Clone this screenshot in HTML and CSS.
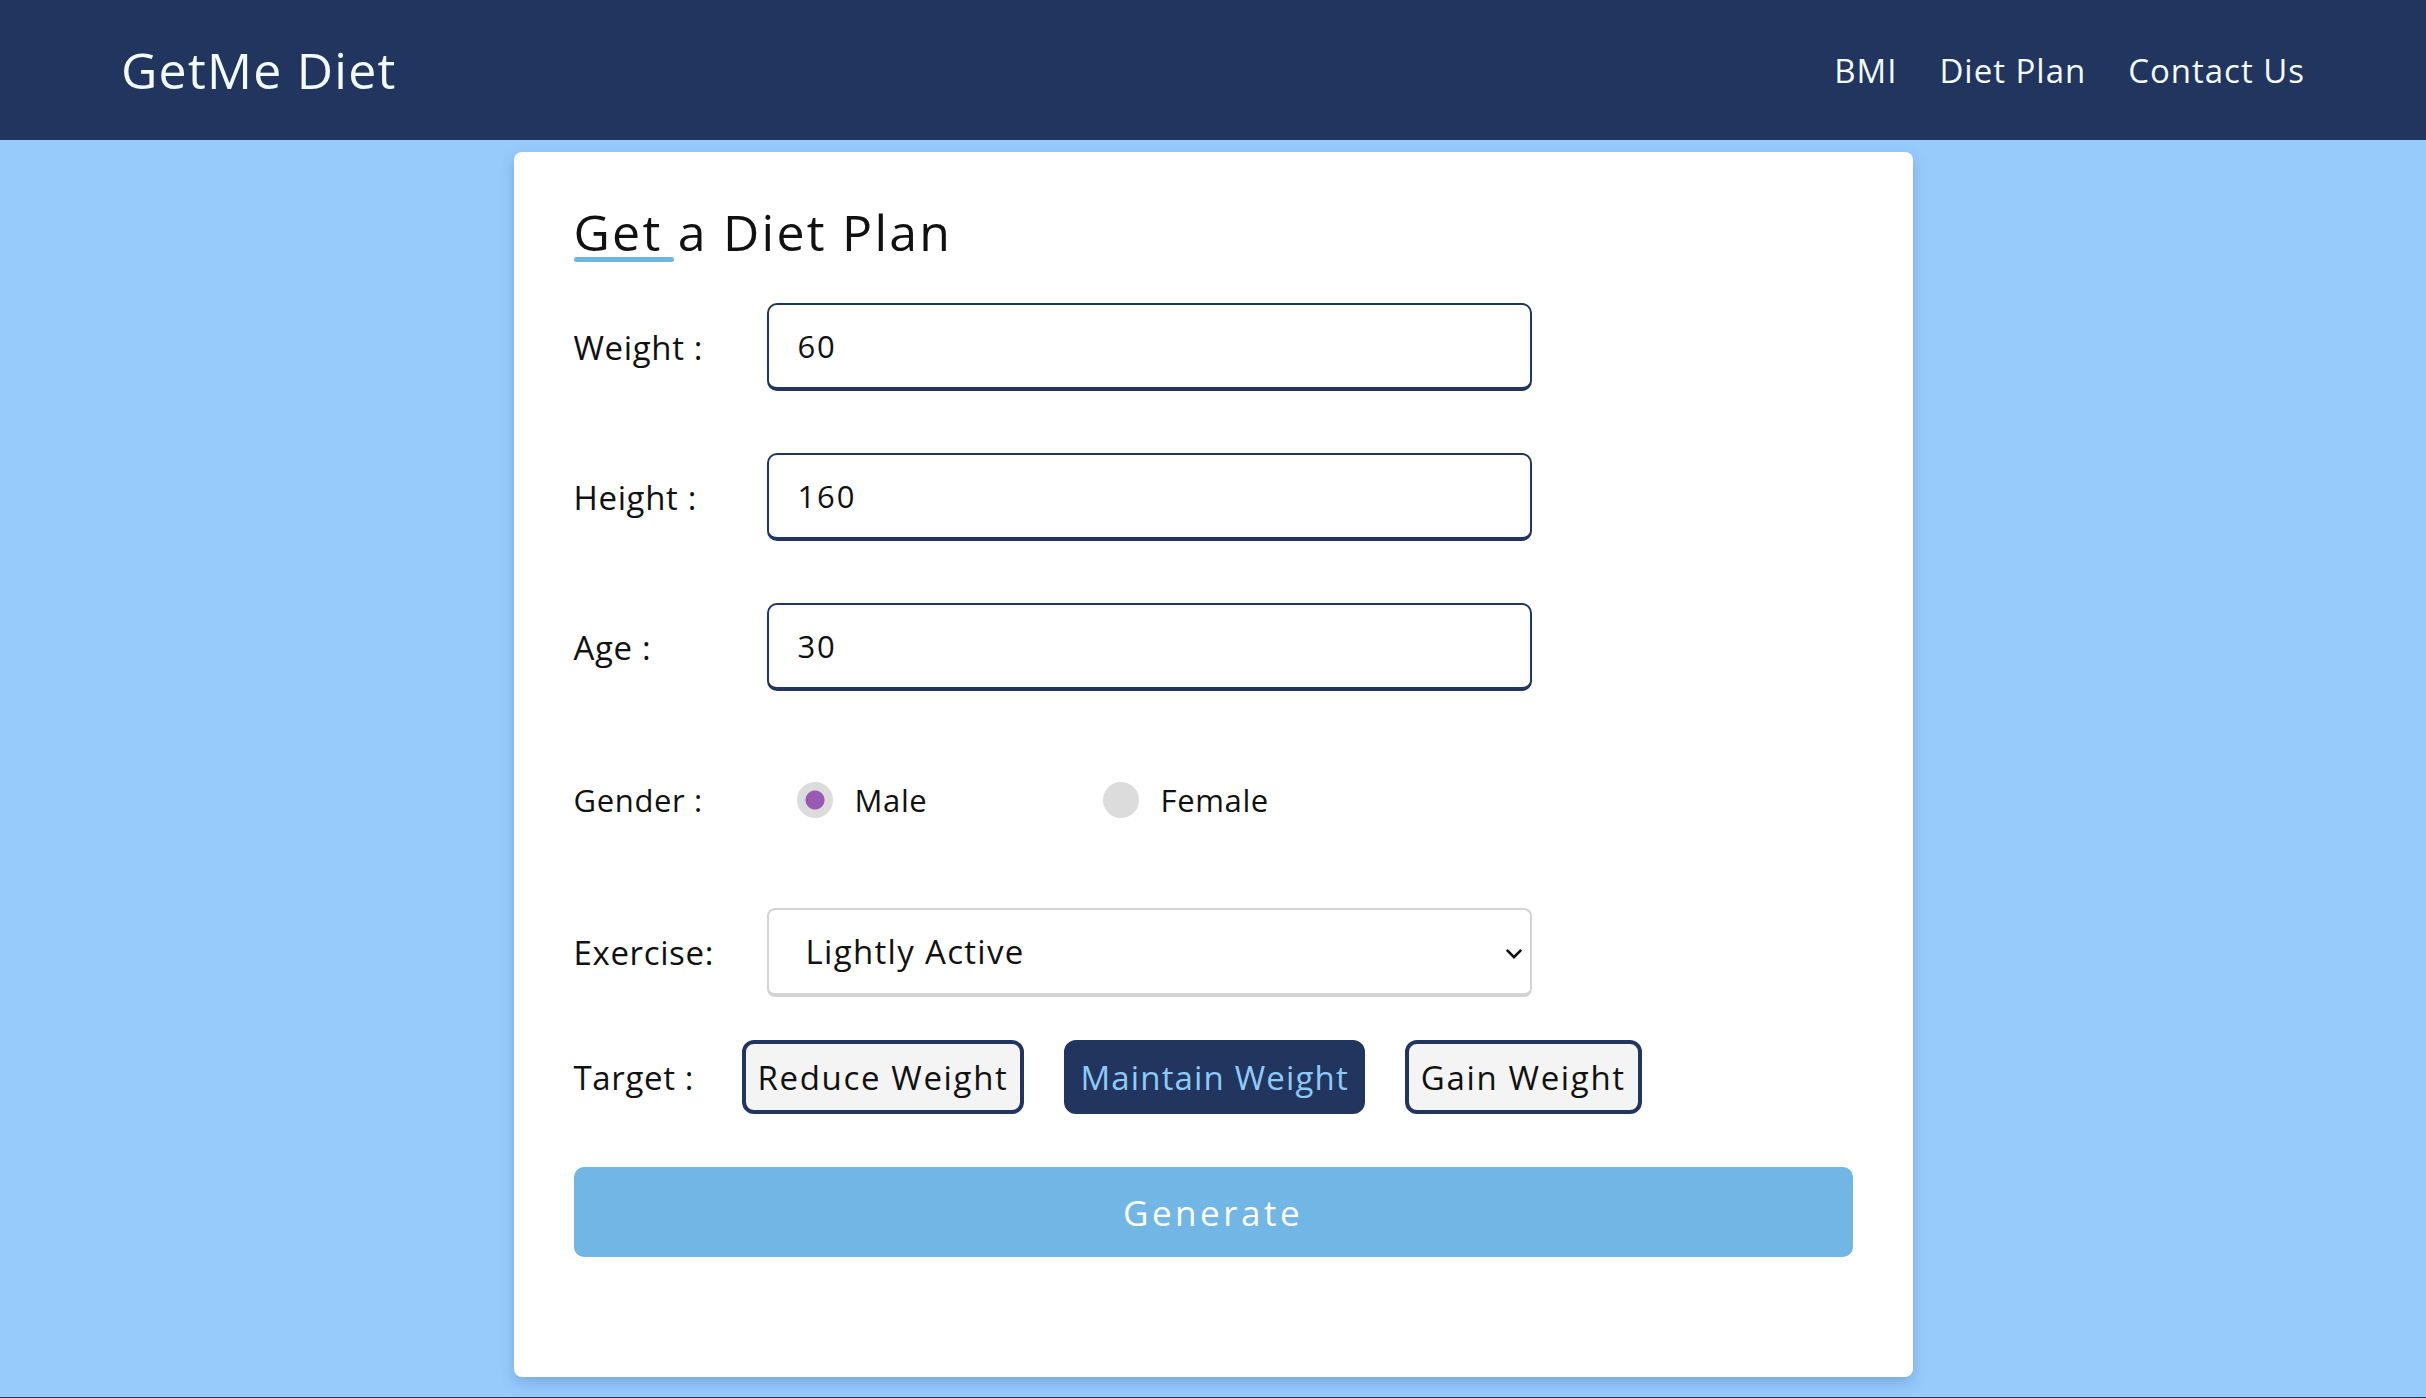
FILE: index.html
```html
<!DOCTYPE html>
<html lang="en">
<head>
<meta charset="utf-8">
<title>GetMe Diet</title>
<link rel="stylesheet" href="styles.css">
</head>
<body>
<header class="topbar">
  <div class="logo">GetMe Diet</div>
  <nav class="nav">
    <a href="#">BMI</a>
    <a href="#">Diet Plan</a>
    <a href="#">Contact Us</a>
  </nav>
</header>
<main class="page">
  <section class="card">
    <h1 class="title">Get a Diet Plan</h1>
    <div class="title-bar"></div>
    <form class="form">
      <div class="row row-input">
        <label class="label">Weight :</label>
        <input class="field" type="text" value="60">
      </div>
      <div class="row row-input">
        <label class="label">Height :</label>
        <input class="field" type="text" value="160">
      </div>
      <div class="row row-input">
        <label class="label">Age :</label>
        <input class="field" type="text" value="30">
      </div>
      <div class="row row-gender">
        <span class="label">Gender :</span>
        <label class="option"><input class="radio" type="radio" name="g" checked><span>Male</span></label>
        <label class="option"><input class="radio" type="radio" name="g"><span>Female</span></label>
      </div>
      <div class="row row-select">
        <label class="label">Exercise:</label>
        <div class="select-wrap">
          <select class="select">
            <option>Lightly Active</option>
          </select>
          <svg class="chev" viewBox="0 0 20 12" width="18" height="11"><path d="M2 2 L10 10 L18 2" fill="none" stroke="#111" stroke-width="3"/></svg>
        </div>
      </div>
      <div class="row row-target">
        <span class="label label-target">Target :</span>
        <button type="button" class="tbtn">Reduce Weight</button>
        <button type="button" class="tbtn active">Maintain Weight</button>
        <button type="button" class="tbtn">Gain Weight</button>
      </div>
      <button type="button" class="generate">Generate</button>
    </form>
  </section>
</main>
<footer class="footer"></footer>
</body>
</html>
```

FILE: styles.css
```css
* { box-sizing: border-box; }
html, body { margin: 0; padding: 0; }
body {
  background: #97cbfc;
  font-family: "Open Sans", "Noto Sans", sans-serif;
  color: #111;
  letter-spacing: 0.04em;
}
.topbar {
  height: 140px;
  background: #22355f;
  display: flex;
  align-items: center;
  justify-content: space-between;
  padding: 0 121px 0 121px;
}
.logo {
  color: #f2fbff;
  font-size: 50px;
  font-weight: 500;
  letter-spacing: 0.025em;
}
.nav { display: flex; gap: 42px; }
.nav a {
  color: #f2fbff;
  text-decoration: none;
  font-size: 33px;
  letter-spacing: 0.03em;
}
.page {
  padding: 12px 0 20px;
  display: flex;
  justify-content: center;
}
.card {
  width: 1399px;
  background: #fff;
  border-radius: 8px;
  padding: 55px 60px 120px;
  box-shadow: 0 6px 14px rgba(30, 80, 140, 0.25);
}
.title {
  margin: 0;
  font-size: 50px;
  line-height: 50px;
  font-weight: 400;
  color: #111;
  letter-spacing: 0.045em;
}
.title-bar {
  width: 100px;
  height: 5px;
  border-radius: 3px;
  background: #6fb5e3;
  margin-top: 0;
}
.form { display: flex; flex-direction: column; margin-top: 41px; }
.row { display: flex; align-items: center; }
.label {
  width: 193px;
  flex: none;
  font-size: 33px;
  color: #111;
}
.row-input { height: 88px; margin-bottom: 62px; }
.row-input + .row-input + .row-input { margin-bottom: 0; }
.field {
  width: 765px;
  height: 88px;
  border: 2px solid #22355f;
  border-bottom-width: 4px;
  border-radius: 10px;
  padding: 0 29px;
  font-family: inherit;
  font-size: 31px;
  letter-spacing: 0.06em;
  color: #111;
  outline: none;
}
.row-gender { height: 36px; margin-top: 91px; }
.option {
  width: 306px;
  display: flex;
  align-items: center;
  gap: 22px;
  font-size: 31px;
}
.option:first-of-type { margin-left: 30px; }
.radio {
  appearance: none;
  -webkit-appearance: none;
  margin: 0;
  width: 36px;
  height: 36px;
  border-radius: 50%;
  background: #dcdcdc;
  flex: none;
}
.radio:checked {
  background: radial-gradient(circle, #9b59b6 0 9px, #dcdcdc 10px);
}
.row-gender .label { font-size: 31px; }
.row-select { height: 89px; margin-top: 90px; }
.select-wrap { position: relative; width: 765px; height: 89px; }
.select {
  appearance: none;
  -webkit-appearance: none;
  width: 100%;
  height: 100%;
  border: 2px solid #d3d3d3;
  border-bottom-width: 4px;
  border-radius: 8px;
  background: #fff;
  padding: 0 37px;
  font-family: inherit;
  font-size: 33px;
  letter-spacing: 0.04em;
  color: #111;
}
.chev { position: absolute; right: 9px; top: 40px; pointer-events: none; }
.row-target { height: 74px; margin-top: 43px; gap: 40px; }
.label-target { width: 128px; }
.tbtn {
  height: 74px;
  border: 4px solid #22355f;
  border-radius: 12px;
  background: #f4f4f4;
  padding: 0 12px;
  font-family: inherit;
  font-size: 33px;
  letter-spacing: 0.05em;
  color: #111;
}
.tbtn.active { background: #22355f; color: #8ecaf8; letter-spacing: 0.035em; }
.generate {
  margin-top: 53px;
  height: 90px;
  width: 100%;
  border: none;
  border-radius: 10px;
  background: #71b6e4;
  color: #fff;
  font-family: inherit;
  font-size: 35px;
  letter-spacing: 3.5px;
}
.footer { background: #22355f; height: 60px; }
```
